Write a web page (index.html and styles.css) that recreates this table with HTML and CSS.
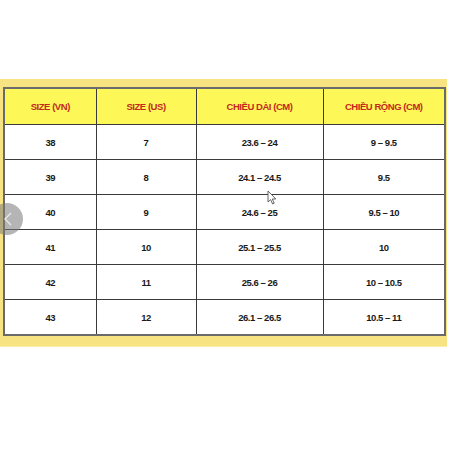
FILE: index.html
```html
<!DOCTYPE html>
<html>
<head>
<meta charset="utf-8">
<link rel="stylesheet" href="styles.css">
</head>
<body>
<div class="page">
  <div class="frame">
    <table class="sizes">
      <colgroup>
        <col class="c1"><col class="c2"><col class="c3"><col class="c4">
      </colgroup>
      <tr class="head"><th>SIZE (VN)</th><th>SIZE (US)</th><th>CHIỀU DÀI (CM)</th><th>CHIỀU RỘNG (CM)</th></tr>
      <tr><td>38</td><td>7</td><td>23.6 – 24</td><td>9 – 9.5</td></tr>
      <tr><td>39</td><td>8</td><td>24.1 – 24.5</td><td>9.5</td></tr>
      <tr><td>40</td><td>9</td><td>24.6 – 25</td><td>9.5 – 10</td></tr>
      <tr><td>41</td><td>10</td><td>25.1 – 25.5</td><td>10</td></tr>
      <tr><td>42</td><td>11</td><td>25.6 – 26</td><td>10 – 10.5</td></tr>
      <tr><td>43</td><td>12</td><td>26.1 – 26.5</td><td>10.5 – 11</td></tr>
    </table>
  </div>
  <div class="nav"><svg width="10" height="14" viewBox="0 0 10 14"><path d="M8 1 L2 7 L8 13" fill="none" stroke="#e8e8e8" stroke-width="1.4"/></svg></div>
  <svg class="cursor" width="10" height="15" viewBox="0 0 10 15"><path d="M1 1 L1 12 L3.6 9.6 L5.6 14 L7.2 13.3 L5.3 9 L8.8 9 Z" fill="#fff" stroke="#555" stroke-width="0.9"/></svg>
</div>
</body>
</html>
```
FILE: styles.css
```css
html, body { margin: 0; padding: 0; background: #fff; }
.page { position: relative; width: 450px; height: 450px; padding-top: 79px; box-sizing: border-box; }
.frame {
  width: 447px;
  box-sizing: border-box;
  padding: 8px 3px 10px 3px;
  background: #f8e383;
  border-bottom: 1px solid #fbeea8;
}
.sizes {
  width: 441px;
  border-collapse: collapse;
  table-layout: fixed;
  background: #fff;
  border: 2px solid #6a6a6a;
  font-family: "Liberation Sans", Arial, sans-serif;
  font-weight: bold;
  font-size: 9.5px;
  letter-spacing: -0.45px;
}
.c1 { width: 92px; } .c2 { width: 100px; } .c3 { width: 127px; } .c4 { width: 122px; }
.sizes th, .sizes td {
  border: 1px solid #3a3a3a;
  text-align: center;
  padding: 0;
  height: 34px;
}
.sizes .head th { height: 35px; background: #fdf858; color: #c4281c; font-weight: bold; }
.sizes td { color: #1a1a1a; }
.nav {
  position: absolute;
  left: -9px; top: 203px;
  width: 32px; height: 32px;
  border-radius: 50%;
  background: rgba(120,120,120,0.55);
  display: flex; align-items: center; justify-content: flex-start;
  padding-left: 12px; box-sizing: border-box;
}
.cursor { position: absolute; left: 267px; top: 190px; }
```
